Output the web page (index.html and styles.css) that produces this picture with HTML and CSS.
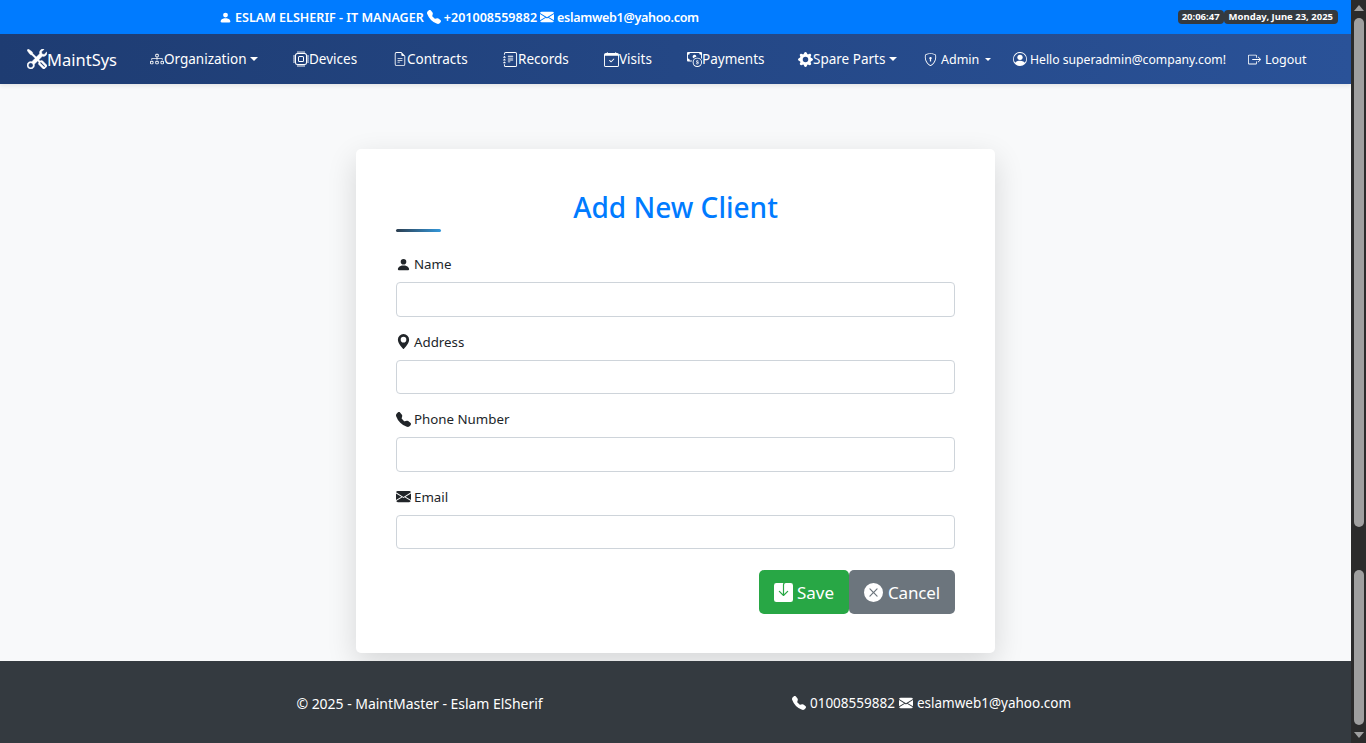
FILE: index.html
```html
<!DOCTYPE html>
<html lang="en">
<head>
<meta charset="utf-8">
<title>Add New Client</title>
<link rel="stylesheet" href="styles.css">
</head>
<body>
<svg class="defs" width="0" height="0">
<symbol id="person" viewBox="0 0 16 16"><path d="M3 14s-1 0-1-1 1-4 6-4 6 3 6 4-1 1-1 1H3Zm5-6a3 3 0 1 0 0-6 3 3 0 0 0 0 6Z"/></symbol>
<symbol id="phone" viewBox="0 0 16 16"><path d="M1.885.511a1.745 1.745 0 0 1 2.61.163L6.29 2.98c.329.423.445.974.315 1.494l-.547 2.19a.678.678 0 0 0 .178.643l2.457 2.457a.678.678 0 0 0 .644.178l2.189-.547a1.745 1.745 0 0 1 1.494.315l2.306 1.794c.829.645.905 1.87.163 2.611l-1.034 1.034c-.74.74-1.846 1.065-2.877.702a18.634 18.634 0 0 1-7.01-4.42 18.634 18.634 0 0 1-4.42-7.009c-.362-1.03-.037-2.137.703-2.877L1.885.511z"/></symbol>
<symbol id="mail" viewBox="0 0 16 16"><path d="M.05 3.555A2 2 0 0 1 2 2h12a2 2 0 0 1 1.95 1.555L8 8.414.05 3.555ZM0 4.697v7.104l5.803-3.558L0 4.697ZM6.761 8.83l-6.57 4.027A2 2 0 0 0 2 14h12a2 2 0 0 0 1.808-1.144l-6.57-4.027L8 9.586l-1.239-.757Zm3.436-.586L16 11.801V4.697l-5.803 3.546Z"/></symbol>
<symbol id="geo" viewBox="0 0 16 16"><path d="M8 16s6-5.686 6-10A6 6 0 0 0 2 6c0 4.314 6 10 6 10zm0-7a3 3 0 1 1 0-6 3 3 0 0 1 0 6z"/></symbol>
<symbol id="tools" viewBox="0 0 16 16"><path d="M1 0 0 1l2.2 3.081a1 1 0 0 0 .815.419h.07a1 1 0 0 1 .708.293l2.675 2.675-2.617 2.654A3.003 3.003 0 0 0 0 13a3 3 0 1 0 5.878-.851l2.654-2.617.968.968-.305.914a1 1 0 0 0 .242 1.023l3.27 3.27a.997.997 0 0 0 1.414 0l1.586-1.586a.997.997 0 0 0 0-1.414l-3.27-3.27a1 1 0 0 0-1.023-.242L10.5 9.5l-.96-.96 2.68-2.643A3.005 3.005 0 0 0 16 3c0-.269-.035-.53-.102-.777l-2.14 2.141L12 4l-.364-1.757L13.777.102a3 3 0 0 0-3.675 3.68L7.462 6.46 4.793 3.793a1 1 0 0 1-.293-.707v-.071a1 1 0 0 0-.419-.814L1 0Zm9.646 10.646a.5.5 0 0 1 .708 0l2.914 2.915a.5.5 0 0 1-.707.707l-2.915-2.914a.5.5 0 0 1 0-.708ZM3 11l.471.242.529.026.287.445.445.287.026.529L5 13l-.242.471-.026.529-.445.287-.287.445-.529.026L3 15l-.471-.242L2 14.732l-.287-.445L1.268 14l-.026-.529L1 13l.242-.471.026-.529.445-.287.287-.445.529-.026L3 11Z"/></symbol>
<symbol id="diagram" viewBox="0 0 16 16"><path d="M6 3.5A1.5 1.5 0 0 1 7.5 2h1A1.5 1.5 0 0 1 10 3.5v1A1.5 1.5 0 0 1 8.5 6v1H14a.5.5 0 0 1 .5.5v1a.5.5 0 0 1-1 0V8h-5v.5a.5.5 0 0 1-1 0V8h-5v.5a.5.5 0 0 1-1 0v-1A.5.5 0 0 1 2 7h5.5V6A1.5 1.5 0 0 1 6 4.5v-1zM8.5 5a.5.5 0 0 0 .5-.5v-1a.5.5 0 0 0-.5-.5h-1a.5.5 0 0 0-.5.5v1a.5.5 0 0 0 .5.5h1zM0 11.5A1.5 1.5 0 0 1 1.5 10h1A1.5 1.5 0 0 1 4 11.5v1A1.5 1.5 0 0 1 2.5 14h-1A1.5 1.5 0 0 1 0 12.5v-1zm1.5-.5a.5.5 0 0 0-.5.5v1a.5.5 0 0 0 .5.5h1a.5.5 0 0 0 .5-.5v-1a.5.5 0 0 0-.5-.5h-1zm4.5.5A1.5 1.5 0 0 1 7.5 10h1a1.5 1.5 0 0 1 1.5 1.5v1A1.5 1.5 0 0 1 8.5 14h-1A1.5 1.5 0 0 1 6 12.5v-1zm1.5-.5a.5.5 0 0 0-.5.5v1a.5.5 0 0 0 .5.5h1a.5.5 0 0 0 .5-.5v-1a.5.5 0 0 0-.5-.5h-1zm4.5.5a1.5 1.5 0 0 1 1.5-1.5h1a1.5 1.5 0 0 1 1.5 1.5v1a1.5 1.5 0 0 1-1.5 1.5h-1a1.5 1.5 0 0 1-1.5-1.5v-1zm1.5-.5a.5.5 0 0 0-.5.5v1a.5.5 0 0 0 .5.5h1a.5.5 0 0 0 .5-.5v-1a.5.5 0 0 0-.5-.5h-1z"/></symbol>
<symbol id="cpu" viewBox="0 0 16 16"><path d="M5 0a.5.5 0 0 1 .5.5V2h1V.5a.5.5 0 0 1 1 0V2h1V.5a.5.5 0 0 1 1 0V2h1V.5a.5.5 0 0 1 1 0V2A2.5 2.5 0 0 1 14 4.5h1.5a.5.5 0 0 1 0 1H14v1h1.5a.5.5 0 0 1 0 1H14v1h1.5a.5.5 0 0 1 0 1H14v1h1.5a.5.5 0 0 1 0 1H14a2.5 2.5 0 0 1-2.5 2.5v1.5a.5.5 0 0 1-1 0V14h-1v1.5a.5.5 0 0 1-1 0V14h-1v1.5a.5.5 0 0 1-1 0V14h-1v1.5a.5.5 0 0 1-1 0V14A2.5 2.5 0 0 1 2 11.5H.5a.5.5 0 0 1 0-1H2v-1H.5a.5.5 0 0 1 0-1H2v-1H.5a.5.5 0 0 1 0-1H2v-1H.5a.5.5 0 0 1 0-1H2A2.5 2.5 0 0 1 4.5 2V.5A.5.5 0 0 1 5 0zm-.5 3A1.5 1.5 0 0 0 3 4.5v7A1.5 1.5 0 0 0 4.5 13h7a1.5 1.5 0 0 0 1.5-1.5v-7A1.5 1.5 0 0 0 11.5 3h-7zM5 6.5A1.5 1.5 0 0 1 6.5 5h3A1.5 1.5 0 0 1 11 6.5v3A1.5 1.5 0 0 1 9.5 11h-3A1.5 1.5 0 0 1 5 9.5v-3zM6.5 6a.5.5 0 0 0-.5.5v3a.5.5 0 0 0 .5.5h3a.5.5 0 0 0 .5-.5v-3a.5.5 0 0 0-.5-.5h-3z"/></symbol>
<symbol id="file" viewBox="0 0 16 16"><path d="M5.5 7a.5.5 0 0 0 0 1h5a.5.5 0 0 0 0-1h-5zM5 9.5a.5.5 0 0 1 .5-.5h5a.5.5 0 0 1 0 1h-5a.5.5 0 0 1-.5-.5zm0 2a.5.5 0 0 1 .5-.5h2a.5.5 0 0 1 0 1h-2a.5.5 0 0 1-.5-.5z"/><path d="M9.5 0H4a2 2 0 0 0-2 2v12a2 2 0 0 0 2 2h8a2 2 0 0 0 2-2V4.5L9.5 0zm0 1v2A1.5 1.5 0 0 0 11 4.5h2V14a1 1 0 0 1-1 1H4a1 1 0 0 1-1-1V2a1 1 0 0 1 1-1h5.5z"/></symbol>
<symbol id="journal" viewBox="0 0 16 16"><path d="M5 10.5a.5.5 0 0 1 .5-.5h2a.5.5 0 0 1 0 1h-2a.5.5 0 0 1-.5-.5zm0-2a.5.5 0 0 1 .5-.5h5a.5.5 0 0 1 0 1h-5a.5.5 0 0 1-.5-.5zm0-2a.5.5 0 0 1 .5-.5h5a.5.5 0 0 1 0 1h-5a.5.5 0 0 1-.5-.5zm0-2a.5.5 0 0 1 .5-.5h5a.5.5 0 0 1 0 1h-5a.5.5 0 0 1-.5-.5z"/><path d="M3 0h10a2 2 0 0 1 2 2v12a2 2 0 0 1-2 2H3a2 2 0 0 1-2-2v-1h1v1a1 1 0 0 0 1 1h10a1 1 0 0 0 1-1V2a1 1 0 0 0-1-1H3a1 1 0 0 0-1 1v1H1V2a2 2 0 0 1 2-2z"/><path d="M1 5v-.5a.5.5 0 0 1 1 0V5h.5a.5.5 0 0 1 0 1h-2a.5.5 0 0 1 0-1H1zm0 3v-.5a.5.5 0 0 1 1 0V8h.5a.5.5 0 0 1 0 1h-2a.5.5 0 0 1 0-1H1zm0 3v-.5a.5.5 0 0 1 1 0v.5h.5a.5.5 0 0 1 0 1h-2a.5.5 0 0 1 0-1H1z"/></symbol>
<symbol id="calendar" viewBox="0 0 16 16"><path d="M10.854 7.146a.5.5 0 0 1 0 .708l-3 3a.5.5 0 0 1-.708 0l-1.5-1.5a.5.5 0 1 1 .708-.708L7.5 9.793l2.646-2.647a.5.5 0 0 1 .708 0z"/><path d="M3.5 0a.5.5 0 0 1 .5.5V1h8V.5a.5.5 0 0 1 1 0V1h1a2 2 0 0 1 2 2v11a2 2 0 0 1-2 2H2a2 2 0 0 1-2-2V3a2 2 0 0 1 2-2h1V.5a.5.5 0 0 1 .5-.5zM1 4v10a1 1 0 0 0 1 1h12a1 1 0 0 0 1-1V4H1z"/></symbol>
<symbol id="cash" viewBox="0 0 16 16"><path fill-rule="evenodd" d="M11 15a4 4 0 1 0 0-8 4 4 0 0 0 0 8zm5-4a5 5 0 1 1-10 0 5 5 0 0 1 10 0z"/><path d="M9.438 11.944c.047.596.518 1.06 1.363 1.116v.44h.375v-.443c.875-.061 1.386-.529 1.386-1.207 0-.618-.39-.936-1.09-1.1l-.296-.07v-1.2c.376.043.614.248.671.532h.658c-.047-.575-.54-1.024-1.329-1.073V8.5h-.375v.45c-.747.073-1.255.522-1.255 1.158 0 .562.378.92 1.007 1.066l.248.061v1.272c-.384-.058-.639-.27-.696-.563h-.668zm1.36-1.354c-.369-.085-.569-.26-.569-.522 0-.294.216-.514.572-.578v1.1h-.003zm.432.746c.449.104.655.272.655.569 0 .339-.257.571-.709.614v-1.195l.054.012z"/><path d="M1 0a1 1 0 0 0-1 1v8a1 1 0 0 0 1 1h4.083c.058-.344.145-.678.258-1H3a2 2 0 0 0-2-2V3a2 2 0 0 0 2-2h10a2 2 0 0 0 2 2v3.528c.38.34.717.728 1 1.154V1a1 1 0 0 0-1-1H1z"/><path d="M9.998 5.083 10 5a2 2 0 1 0-3.132 1.65 5.982 5.982 0 0 1 3.13-1.567z"/></symbol>
<symbol id="gear" viewBox="0 0 16 16"><path d="M9.405 1.05c-.413-1.4-2.397-1.4-2.81 0l-.1.34a1.464 1.464 0 0 1-2.105.872l-.31-.17c-1.283-.698-2.686.705-1.987 1.987l.169.311c.446.82.023 1.841-.872 2.105l-.34.1c-1.4.413-1.4 2.397 0 2.81l.34.1a1.464 1.464 0 0 1 .872 2.105l-.17.31c-.698 1.283.705 2.686 1.987 1.987l.311-.169a1.464 1.464 0 0 1 2.105.872l.1.34c.413 1.4 2.397 1.4 2.81 0l.1-.34a1.464 1.464 0 0 1 2.105-.872l.31.17c1.283.698 2.686-.705 1.987-1.987l-.169-.311a1.464 1.464 0 0 1 .872-2.105l.34-.1c1.4-.413 1.4-2.397 0-2.81l-.34-.1a1.464 1.464 0 0 1-.872-2.105l.17-.31c.698-1.283-.705-2.686-1.987-1.987l-.311.169a1.464 1.464 0 0 1-2.105-.872l-.1-.34zM8 10.93a2.929 2.929 0 1 1 0-5.86 2.929 2.929 0 0 1 0 5.858z"/></symbol>
<symbol id="shield" viewBox="0 0 16 16"><path d="M5.338 1.59a61.44 61.44 0 0 0-2.837.856.481.481 0 0 0-.328.39c-.554 4.157.726 7.19 2.253 9.188a10.725 10.725 0 0 0 2.287 2.233c.346.244.652.42.893.533.12.057.218.095.293.118a.55.55 0 0 0 .101.025.615.615 0 0 0 .1-.025c.076-.023.174-.061.294-.118.24-.113.547-.29.893-.533a10.726 10.726 0 0 0 2.287-2.233c1.527-1.997 2.807-5.031 2.253-9.188a.48.48 0 0 0-.328-.39c-.651-.213-1.75-.56-2.837-.855C9.552 1.29 8.531 1.067 8 1.067c-.53 0-1.552.223-2.662.524zM5.072.56C6.157.265 7.31 0 8 0s1.843.265 2.928.56c1.11.3 2.229.655 2.887.87a1.54 1.54 0 0 1 1.044 1.262c.596 4.477-.787 7.795-2.465 9.99a11.775 11.775 0 0 1-2.517 2.453 7.159 7.159 0 0 1-1.048.625c-.28.132-.581.24-.829.24s-.548-.108-.829-.24a7.158 7.158 0 0 1-1.048-.625 11.777 11.777 0 0 1-2.517-2.453C1.928 10.487.545 7.169 1.141 2.692A1.54 1.54 0 0 1 2.185 1.43 62.456 62.456 0 0 1 5.072.56z"/><path d="M9.5 6.5a1.5 1.5 0 0 1-1 1.415l.385 1.99a.5.5 0 0 1-.491.595h-.788a.5.5 0 0 1-.49-.595l.384-1.99a1.5 1.5 0 1 1 2-1.415z"/></symbol>
<symbol id="personc" viewBox="0 0 16 16"><path d="M11 6a3 3 0 1 1-6 0 3 3 0 0 1 6 0z"/><path fill-rule="evenodd" d="M0 8a8 8 0 1 1 16 0A8 8 0 0 1 0 8zm8-7a7 7 0 0 0-5.468 11.37C3.242 11.226 4.805 10 8 10s4.757 1.225 5.468 2.37A7 7 0 0 0 8 1z"/></symbol>
<symbol id="logout" viewBox="0 0 16 16"><path fill-rule="evenodd" d="M10 12.5a.5.5 0 0 1-.5.5h-8a.5.5 0 0 1-.5-.5v-9a.5.5 0 0 1 .5-.5h8a.5.5 0 0 1 .5.5v2a.5.5 0 0 0 1 0v-2A1.5 1.5 0 0 0 9.5 2h-8A1.5 1.5 0 0 0 0 3.5v9A1.5 1.5 0 0 0 1.5 14h8a1.5 1.5 0 0 0 1.5-1.5v-2a.5.5 0 0 0-1 0v2z"/><path fill-rule="evenodd" d="M15.854 8.354a.5.5 0 0 0 0-.708l-3-3a.5.5 0 0 0-.708.708L14.293 7.5H5.5a.5.5 0 0 0 0 1h8.793l-2.147 2.146a.5.5 0 0 0 .708.708l3-3z"/></symbol>
<symbol id="save" viewBox="0 0 16 16"><path d="M8.5 1.5A1.5 1.5 0 0 1 10 0h4a2 2 0 0 1 2 2v12a2 2 0 0 1-2 2H2a2 2 0 0 1-2-2V2a2 2 0 0 1 2-2h6c-.314.418-.5.937-.5 1.5v7.793L4.854 6.646a.5.5 0 1 0-.708.708l3.5 3.5a.5.5 0 0 0 .708 0l3.5-3.5a.5.5 0 0 0-.708-.708L8.5 9.293V1.5z"/></symbol>
<symbol id="xcircle" viewBox="0 0 16 16"><path d="M16 8A8 8 0 1 1 0 8a8 8 0 0 1 16 0zM5.354 4.646a.5.5 0 1 0-.708.708L7.293 8l-2.647 2.646a.5.5 0 0 0 .708.708L8 8.707l2.646 2.647a.5.5 0 0 0 .708-.708L8.707 8l2.647-2.646a.5.5 0 0 0-.708-.708L8 7.293 5.354 4.646z"/></symbol>
</svg>
<div class="window">
  <div class="page">
    <header class="topbar">
      <div class="contact">
        <svg class="ic ic-13"><use href="#person"/></svg><span>ESLAM ELSHERIF - IT MANAGER</span>
        <svg class="ic ic-14"><use href="#phone"/></svg><span>+201008559882</span>
        <svg class="ic ic-14"><use href="#mail"/></svg><span class="tight">eslamweb1@yahoo.com</span>
      </div>
      <div class="clock"><span class="badge">20:06:47</span><span class="badge badge-date">Monday, June 23, 2025</span></div>
    </header>
    <nav class="navbar">
      <a class="brand"><svg class="ic ic-20 heavy"><use href="#tools"/></svg>MaintSys</a>
      <a class="item"><svg class="ic ic-14"><use href="#diagram"/></svg>Organization<i class="caret"></i></a>
      <a class="item"><svg class="ic ic-16"><use href="#cpu"/></svg>Devices</a>
      <a class="item"><svg class="ic ic-14"><use href="#file"/></svg>Contracts</a>
      <a class="item"><svg class="ic ic-15"><use href="#journal"/></svg>Records</a>
      <a class="item"><svg class="ic ic-15"><use href="#calendar"/></svg>Visits</a>
      <a class="item"><svg class="ic ic-15"><use href="#cash"/></svg>Payments</a>
      <a class="item"><svg class="ic ic-15"><use href="#gear"/></svg>Spare Parts<i class="caret"></i></a>
      <a class="item small spaced"><svg class="ic ic-13"><use href="#shield"/></svg>Admin<i class="caret caret-small"></i></a>
      <a class="item small hello"><svg class="ic ic-14"><use href="#personc"/></svg>Hello superadmin@company.com!</a>
      <a class="item small spaced"><svg class="ic ic-13"><use href="#logout"/></svg>Logout</a>
    </nav>
    <main class="content">
      <form class="card">
        <h1 class="title">Add New Client</h1>
        <div class="rule"></div>
        <div class="field">
          <label class="label"><svg class="ic ic-15"><use href="#person"/></svg>Name</label>
          <input class="input" type="text">
        </div>
        <div class="field">
          <label class="label"><svg class="ic ic-15"><use href="#geo"/></svg>Address</label>
          <input class="input" type="text">
        </div>
        <div class="field">
          <label class="label"><svg class="ic ic-15"><use href="#phone"/></svg>Phone Number</label>
          <input class="input" type="text">
        </div>
        <div class="field">
          <label class="label"><svg class="ic ic-15"><use href="#mail"/></svg>Email</label>
          <input class="input" type="text">
        </div>
        <div class="actions">
          <button class="btn btn-save" type="button"><svg class="ic ic-18"><use href="#save"/></svg>Save</button>
          <button class="btn btn-cancel" type="button"><svg class="ic ic-18"><use href="#xcircle"/></svg>Cancel</button>
        </div>
      </form>
    </main>
    <footer class="footer">
      <div class="foot-col foot-copy">© 2025 - MaintMaster - Eslam ElSherif</div>
      <div class="foot-col"><svg class="ic ic-14"><use href="#phone"/></svg><span>01008559882</span><svg class="ic ic-14"><use href="#mail"/></svg><span>eslamweb1@yahoo.com</span></div>
    </footer>
  </div>
  <aside class="scrollbar">
    <span class="arrow arrow-up"></span>
    <span class="thumb thumb-a"></span>
    <span class="thumb thumb-b"></span>
    <span class="arrow arrow-down"></span>
  </aside>
</div>
</body>
</html>
```
FILE: styles.css
```css
* { box-sizing: border-box; }
html, body { margin: 0; height: 743px; overflow: hidden; }
body { font-family: "Noto Sans", "Open Sans", sans-serif; color: #212529; }
.defs { position: absolute; }
.ic { fill: currentColor; flex: none; display: block; }
.ic-13 { width: 13px; height: 13px; }
.ic-14 { width: 14px; height: 14px; }
.ic-15 { width: 15px; height: 15px; }
.ic-16 { width: 16px; height: 16px; }
.ic-18 { width: 19px; height: 19px; }
.ic-20 { width: 20px; height: 20px; }
.heavy { stroke: currentColor; stroke-width: .35; }

.window { display: flex; height: 743px; }
.page { flex: 1; min-width: 0; display: flex; flex-direction: column; }

.topbar { height: 34px; background: #007bff; color: #fff; display: flex; align-items: center; justify-content: space-between; padding: 0 13px 0 219px; }
.contact { display: flex; align-items: center; gap: 3px; font-size: 12.55px; font-weight: 600; }
.tight { letter-spacing: -.32px; }
.clock { display: flex; }
.badge { background: #343a40; border-radius: 4px; font-size: 9.5px; font-weight: 700; line-height: 14px; padding: 0 4px; }
.badge-date { padding: 0 5px; }

.navbar { height: 50px; background: linear-gradient(90deg, #1e3c72, #2a5298); color: #fff; display: grid; grid-template-columns: 123px 143px 100px 110px 101px 83px 111px 126px 89px 235px 1fr; align-items: center; padding-left: 27px; box-shadow: 0 2px 4px rgba(0,0,0,.08); position: relative; }
.brand { display: flex; align-items: center; font-size: 16.5px; }
.item { display: flex; align-items: center; font-size: 13.5px; }
.item.small { font-size: 12.5px; }
.item.hello { font-size: 12.2px; }
.item.spaced .ic { margin-right: 4px; }
.item.hello .ic { margin-right: 3px; }
.caret { width: 0; height: 0; border: 4px solid transparent; border-top-color: currentColor; border-bottom: 0; margin-left: 4px; }
.caret-small { border-width: 3px; border-bottom: 0; margin-left: 6px; }

.content { height: 577px; background: #f8f9fa; padding-top: 65px; }
.card { width: 639px; height: 504px; margin: 0 auto; background: #fff; border-radius: 5px; padding: 40px; box-shadow: 0 10px 30px rgba(0,0,0,.14); }
.title { margin: 0; font-size: 28px; font-weight: 500; line-height: 36px; text-align: center; color: #007bff; }
.rule { width: 45px; height: 3px; margin-top: 4px; margin-bottom: 21px; border-radius: 2px; background: linear-gradient(90deg, #2c3e50, #3498db); }
.field { margin-bottom: 14px; }
.label { display: flex; align-items: center; gap: 3px; height: 22px; font-size: 13.3px; margin-bottom: 7px; }
.input { display: block; width: 100%; height: 34.5px; border: 1px solid #ced4da; border-radius: 4px; background: #fff; padding: 6px 12px; }

.actions { display: flex; justify-content: flex-end; margin-top: 21px; }
.btn { height: 44px; border: 0; border-radius: 5px; color: #fff; font: inherit; font-size: 17px; display: flex; align-items: center; gap: 4px; padding: 0 15px; }
.btn-save { width: 90px; background: #28a745; }
.btn-cancel { width: 106px; background: #6c757d; gap: 5px; letter-spacing: -.15px; }

.footer { flex: 1; background: #343a40; color: #fff; display: grid; grid-template-columns: 512px 512px; justify-content: center; align-items: center; font-size: 13.5px; padding-top: 2px; }
.foot-col { display: flex; justify-content: center; align-items: center; gap: 4px; }
.foot-copy { font-size: 14px; letter-spacing: -.03px; }

.scrollbar { width: 15px; background: #2b2b2b; position: relative; display: flex; flex-direction: column; align-items: center; padding: 5px 0; }
.thumb { width: 10px; background: #9f9f9f; border-radius: 5px; }
.thumb-a { height: 509px; margin-top: 7px; }
.thumb-b { height: 155px; margin-top: 43px; }
.arrow { width: 0; height: 0; border-left: 5px solid transparent; border-right: 5px solid transparent; }
.arrow-up { border-bottom: 6px solid #9f9f9f; }
.arrow-down { border-top: 6px solid #9f9f9f; margin-top: 7px; }
```
